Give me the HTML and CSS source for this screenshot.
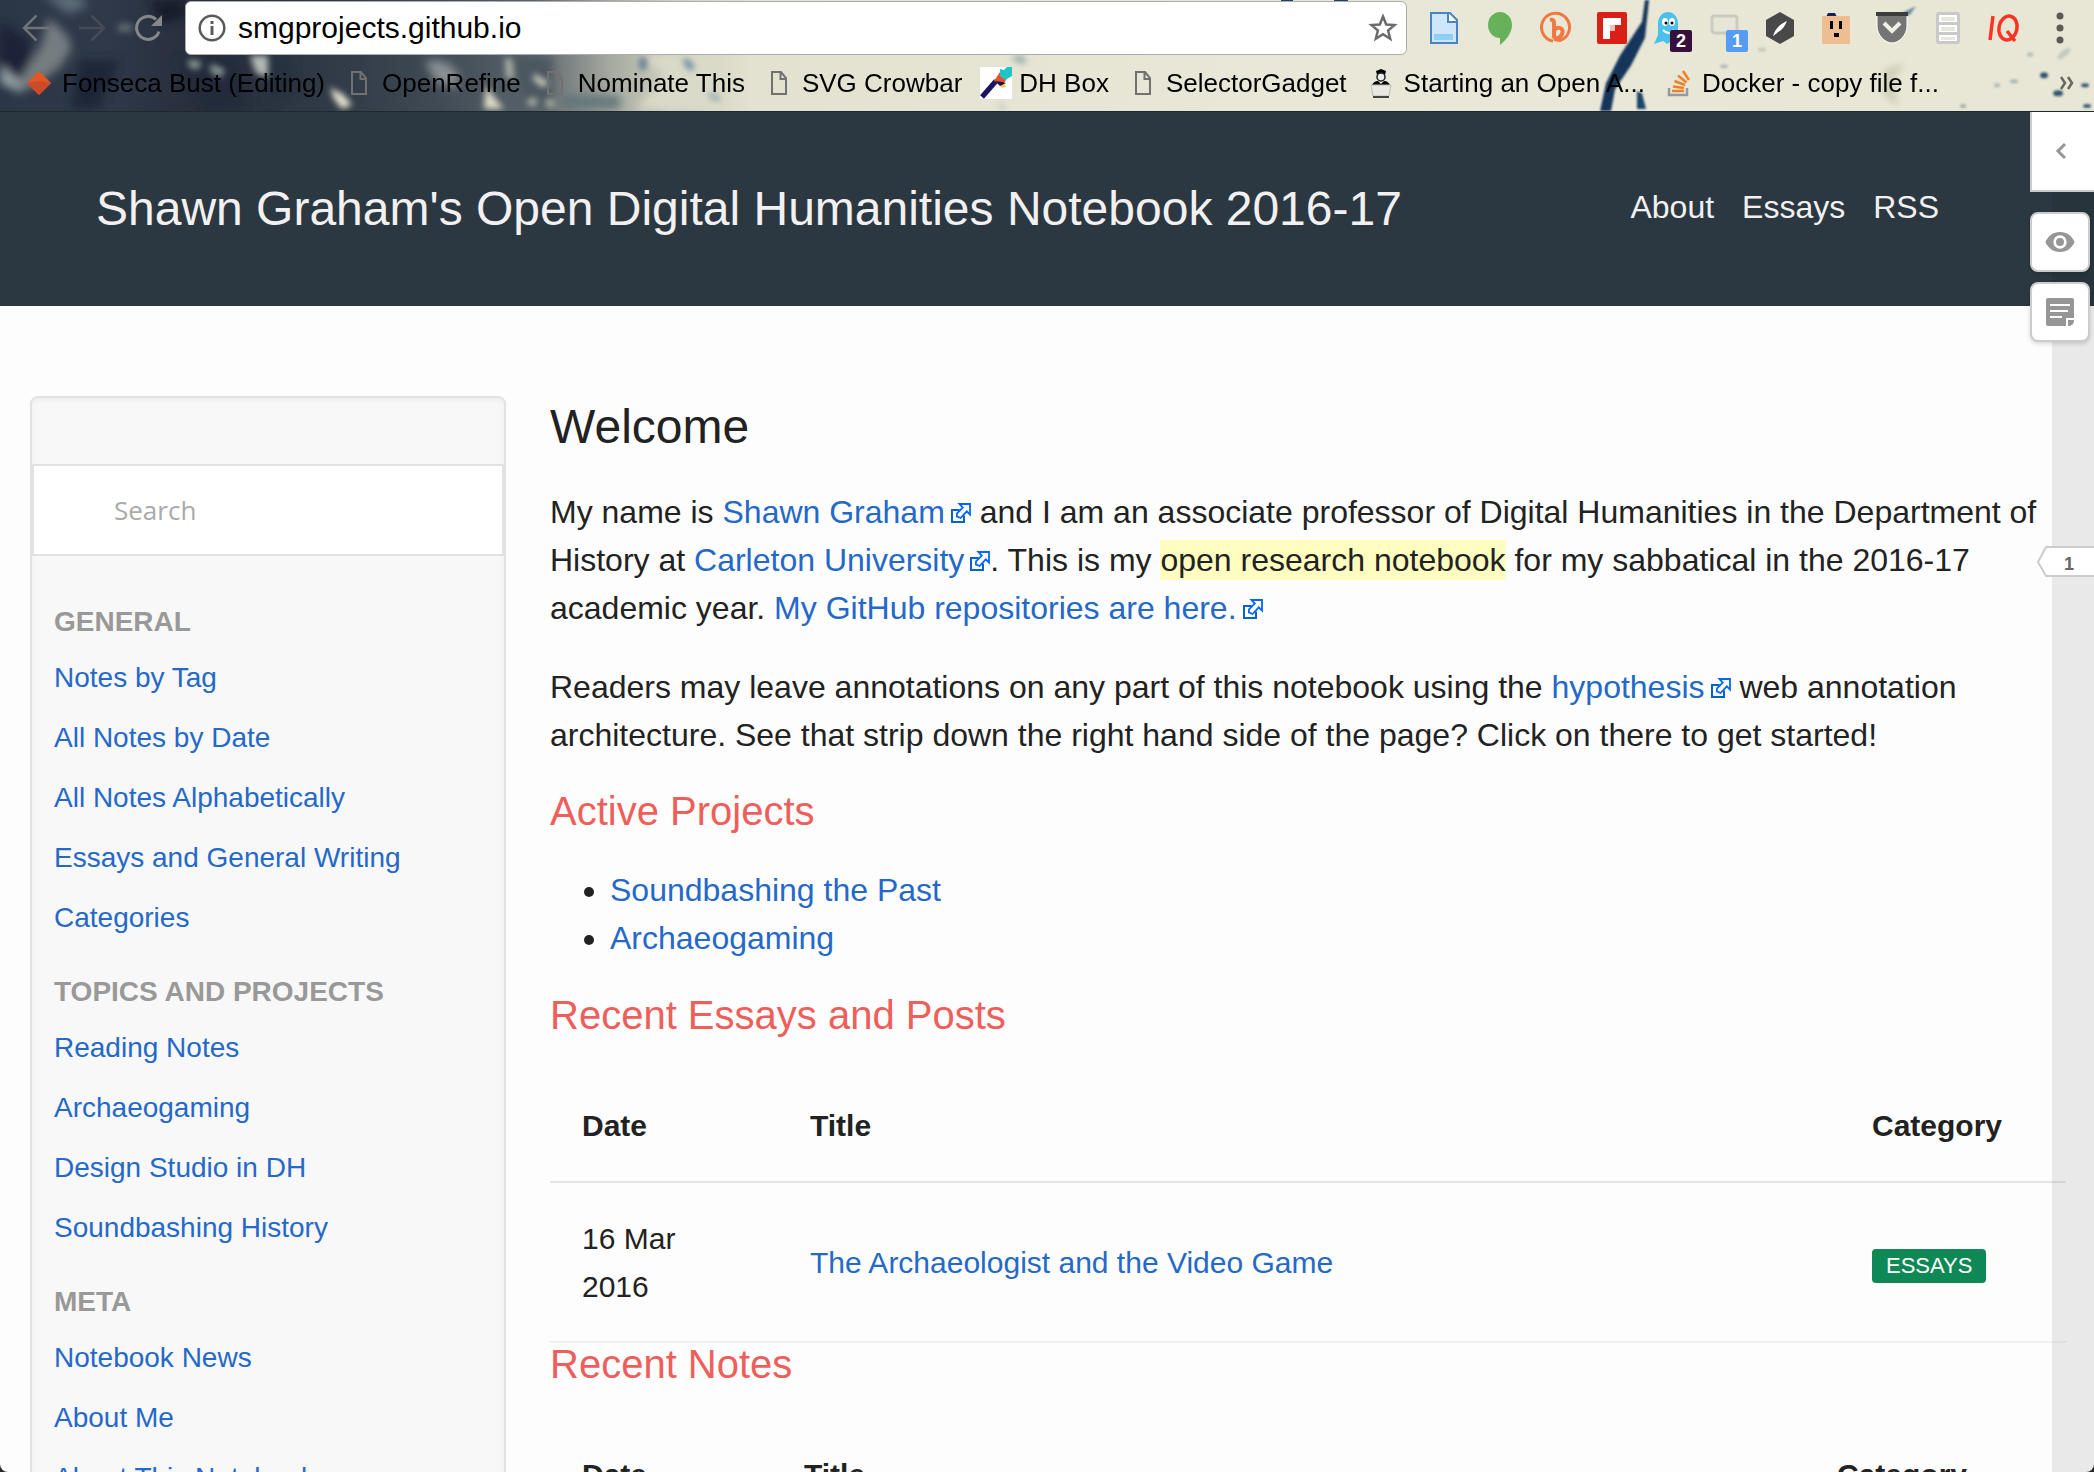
FILE: index.html
```html
<!DOCTYPE html>
<html lang="en">
<head>
<meta charset="utf-8">
<title>Shawn Graham's Open Digital Humanities Notebook 2016-17</title>
<link rel="stylesheet" href="styles.css">
</head>
<body>
<svg class="defs" width="0" height="0" aria-hidden="true">
  <defs>
    <symbol id="external" viewBox="0 0 10 10">
      <path d="M4.300 3.500H.5v6h6V6.200" fill="#fff" stroke="#0661c9"/>
      <path d="M4.200 .5h5.300v5.300L7.900 4.200 4.800 7.500 2.900 6.700 3 5.200 5.900 2.300z" fill="#fff" stroke="#0066ff" stroke-width=".9"/>
    </symbol>
    <symbol id="page" viewBox="0 0 16 24">
      <path d="M1 1h9l5 6v16H1zM9.500 1v7H15" fill="none" stroke="#717171" stroke-width="2"/>
    </symbol>
  </defs>
</svg>
<div class="window">
  <header class="chrome">
    <svg class="theme" viewBox="0 0 2094 112" preserveAspectRatio="none" aria-hidden="true">
      <defs>
        <linearGradient id="photo">
          <stop offset="0" stop-color="#2b3646"/><stop offset=".05" stop-color="#30394a"/>
          <stop offset=".1" stop-color="#262d3b"/><stop offset=".17" stop-color="#333d49"/>
          <stop offset=".21" stop-color="#414b55"/><stop offset=".255" stop-color="#59636a"/>
          <stop offset=".29" stop-color="#a3a79e"/><stop offset=".32" stop-color="#cfcfbe"/>
          <stop offset=".36" stop-color="#e3e2d0"/><stop offset=".6" stop-color="#e9e8d8"/>
          <stop offset="1" stop-color="#e8e7d5"/>
        </linearGradient>
        <filter id="soft" x="-50%" y="-50%" width="200%" height="200%"><feGaussianBlur stdDeviation="5"/></filter>
        <filter id="fine" x="-50%" y="-50%" width="200%" height="200%"><feGaussianBlur stdDeviation="3"/></filter>
        <filter id="edge" x="-50%" y="-50%" width="200%" height="200%"><feGaussianBlur stdDeviation="1"/></filter>
      </defs>
      <rect width="2094" height="112" fill="url(#photo)"/>
      <g filter="url(#soft)">
        <path d="M0 22 28 40 34 75 18 84 0 62z" fill="#1a2238"/>
        <path d="M48 18 66 34 72 48 60 68 30 90 14 90 26 70 42 44z" fill="#747d80"/>
        <path d="M0 66 20 82 22 94 0 84z" fill="#95a1a5"/>
        <path d="M80 60h40l-20 50H70z" fill="#1e2537"/>
        <path d="M42-6h36l10 12-20 8z" fill="#5d6a78"/>
        <path d="M150 0h36v18l-26 6z" fill="#151c2b"/>
        <path d="M176 60h60l10 50h-40z" fill="#202a3b"/>
        <path d="M262 56h30l4 36-28 14z" fill="#283140"/>
        <path d="M425 62c20-6 40 10 32 26l-20-4z" fill="#899195"/>
        <path d="M512 58h40v52h-26z" fill="#4c565f"/>
        <path d="M560 96h60v14h-60z" fill="#65767a"/>
        <path d="M640 56l26 20-30 34h80V56z" fill="#dadac9"/>
      </g>
      <g filter="url(#fine)">
        <path d="M250 56h18v22l-12-4z" fill="#b4b9b5"/>
        <path d="M188 60l14 2-4 8-9-2zM210 64l15 6-3 8-11-4z" fill="#8b9894"/>
        <path d="M330 88l14 8 8 10-10 4-8-10z" fill="#e6e5d0"/>
        <path d="M486 86l8 12 10 12h-20z" fill="#dddbc6"/>
        <path d="M505 58l7 2 2 20-8-2z" fill="#aeb2aa"/>
        <path d="M534 74l16 10-8 4-9-8z" fill="#cdcdbb"/>
        <path d="M527 100l10-2v9h-9zM545 100l10 1v7h-9z" fill="#a7aea4"/>
        <path d="M118 24h14v8h-14z" fill="#5e6a6c"/>
        <path d="M640 58h6v12h-6zM684 58l10 8-2 6-8-8z" fill="#50708c"/>
        <path d="M706 93l12 3 3 6-8-1z" fill="#8ca0aa"/>
        <path d="M1010 58l12-2 6 8-10-1zM1000 102l5 8h-4z" fill="#8fa4a8"/>
        <path d="M1885 68l20-4-12 18 6 26-16-12z" fill="#d0d0bb"/>
      </g>
      <g filter="url(#edge)">
        <path d="M1645 0l4 0-4 38-14 28-16 24-4 22h-11l6-28 14-28 22-34z" fill="#14365a"/>
        <path d="M1637 92l5 2 4 16h-9z" fill="#1b446b"/>
        <path d="M1904 12l12-6-6 9-12 5z" fill="#6f8fa6"/>
      </g>
      <path d="M1281 0h12v1h-12zM1334 0h14v1h-14z" fill="#1d4268"/>
      <g fill="#31546f" filter="url(#edge)">
        <ellipse cx="2044" cy="76" rx="4" ry="3"/><ellipse cx="2058" cy="94" rx="5" ry="3"/>
        <ellipse cx="2085" cy="86" rx="4" ry="2"/><ellipse cx="2087" cy="107" rx="4" ry="2"/>
        <ellipse cx="2014" cy="82" rx="4" ry="2" opacity=".35"/><ellipse cx="1997" cy="86" rx="3" ry="2" opacity=".3"/>
        <ellipse cx="1963" cy="107" rx="3" ry="2" opacity=".4"/><ellipse cx="2030" cy="55" rx="3" ry="2" opacity=".3"/>
        <ellipse cx="1724" cy="67" rx="4" ry="2" opacity=".3"/><ellipse cx="2064" cy="54" rx="8" ry="3" opacity=".2" transform="rotate(-40 2064 54)"/>
        <ellipse cx="1762" cy="50" rx="4" ry="2" opacity=".2"/>
      </g>
    </svg>
    <div class="toolbar">
      <div class="nav-buttons">
        <button aria-label="Back"><svg width="28" height="28" viewBox="0 0 28 28" fill="none" stroke="#707277" stroke-width="2.500"><path d="M27 14H2M14.500 1.500 2 14l12.500 12.500"/></svg></button>
        <button aria-label="Forward"><svg width="28" height="28" viewBox="0 0 28 28" fill="none" stroke="#454b56" stroke-width="2.500"><path d="M1 14h25M13.500 1.500 26 14 13.500 26.500"/></svg></button>
        <button aria-label="Reload"><svg width="28" height="28" viewBox="0 0 28 28"><path d="M22 5.500A11.500 11.500 0 1 0 25 17.500" fill="none" stroke="#85878a" stroke-width="3"/><path d="M28 1v11H17z" fill="#85878a"/></svg></button>
      </div>
      <div class="omnibox">
        <svg width="28" height="28" viewBox="0 0 28 28" aria-hidden="true"><circle cx="14" cy="14" r="12.300" fill="none" stroke="#5a5a5a" stroke-width="2.500"/><path d="M12.500 7h3v3h-3zm0 5h3v9h-3z" fill="#5a5a5a"/></svg>
        <input class="url" type="text" aria-label="Address" value="smgprojects.github.io">
        <button class="star" aria-label="Bookmark this page"><svg width="30" height="30" viewBox="0 0 30 30"><path d="m15 3.500 3.200 8 8.300.6-6.400 5.400 2.100 8.200L15 21.200l-7.200 4.500 2.100-8.200-6.400-5.400 8.300-.6z" fill="none" stroke="#6b6b6b" stroke-width="2.500"/></svg></button>
      </div>
      <div class="extensions">
        <button aria-label="Document"><svg width="32" height="34" viewBox="0 0 32 34"><path d="M3 2h19l7 7v23H3z" fill="#cfe6fa" stroke="#4585c5" stroke-width="2"/><path d="M20 2v9h9" fill="#fff" stroke="#4585c5" stroke-width="2"/><path d="M6 25h19v4H6z" fill="#8bd2f4"/><path d="M6 24h19" stroke="#51b4e2"/></svg></button>
        <button aria-label="Hangouts"><svg width="26" height="34" viewBox="0 0 26 34"><path d="M13 1a12 13 0 0 1 12 13c0 8-6 15-12 20v-7C6 27 1 21 1 14A12 13 0 0 1 13 1z" fill="#67b15b"/></svg></button>
        <button aria-label="Bitly"><svg width="32" height="34" viewBox="0 0 32 34" fill="none" stroke="#f1783f" stroke-width="3"><path d="M13 30a14 14 0 1 1 7-.5l-6-1"/><path d="M10 9c5-1 4 3 4 8v9" stroke-width="4"/><path d="M14 20c3-6 11-3 8 3-2 5-7 5-9 2" stroke-width="4"/></svg></button>
        <button aria-label="Flipboard"><svg width="30" height="32" viewBox="0 0 30 32"><rect width="30" height="32" rx="2" fill="#d91f16"/><path d="M6 6h18v7h-6v6h-5v8H6z" fill="#fff"/><path d="M13 13h5v6h-5z" fill="#f3bdbb"/></svg></button>
        <button aria-label="Ghostery"><svg width="30" height="34" viewBox="0 0 30 34"><path d="M5 13C5-3 25-3 25 13v19l-6-2-5 3-4-3-9 3 4-9z" fill="#4cc0ed"/><ellipse cx="12" cy="11" rx="3" ry="4" fill="#fff"/><ellipse cx="19" cy="11" rx="3" ry="4" fill="#fff"/><circle cx="13" cy="12" r="1.500"/><circle cx="19" cy="12" r="1.500"/><path d="M10 19q6 6 11 0" stroke="#fff" fill="none" stroke-width="2"/></svg><span class="badge badge-plum">2</span></button>
        <button aria-label="Annotations"><svg class="speech" width="32" height="34" viewBox="0 0 32 34"><path d="M6 5h21q2 0 2 2v13q0 2-2 2h-3v8l-7-8H7q-3 0-3-3V7q0-2 2-2z" fill="#e6e5d7" stroke="#cccbc1" stroke-width="3"/></svg><span class="badge badge-blue">1</span></button>
        <button aria-label="Quill"><svg width="28" height="34" viewBox="0 0 28 34"><path d="m14 1 14 8v16l-14 8-14-8V9z" fill="#494949"/><path d="M21 10c-7 3-12 8-14 15 2-1 4-3 5-4 4-2 7-6 9-11z" fill="#fff"/></svg></button>
        <button aria-label="Box friend"><svg width="30" height="34" viewBox="0 0 30 34"><path d="M5 6 7 2h7l2 4z" fill="#16205c"/><path d="M1 5h28v28H1z" fill="#efbe90"/><path d="M9 10h3v8H9zm9 0h3v8h-3zM13 22h5v4h-5z"/></svg></button>
        <button aria-label="Pocket"><svg width="34" height="32" viewBox="0 0 34 32"><path d="M2 1h30v13c0 9-8 17-15 17S2 23 2 14z" fill="#757575" stroke="#fff"/><path d="M1 0h32v4H1z" fill="#3c3c3c"/><path d="m9 11 8 8 8-8" fill="none" stroke="#f1f0e4" stroke-width="4"/></svg></button>
        <button aria-label="Server"><svg width="26" height="34" viewBox="0 0 26 34"><rect x="1" y="1" width="24" height="32" rx="3" fill="#c9c9c9"/><path d="M4 4h18v7H4zm0 10h18v7H4zm0 10h18v6H4z" fill="#fff"/><path d="M6 6h14v4H6zm0 10h14v4H6zm0 10h14v3H6z" fill="#e8e7dd"/></svg></button>
        <button aria-label="IQ"><svg width="32" height="30" viewBox="0 0 32 30" fill="none" stroke="#fb3324" stroke-width="3.500"><path d="M5 3 2 27"/><ellipse cx="20" cy="15" rx="9" ry="12" transform="rotate(12 20 15)"/><path d="m19 18 8 10"/></svg></button>
        <button aria-label="Menu"><svg width="8" height="34" viewBox="0 0 8 34" fill="#5a5a58"><circle cx="4" cy="5" r="3.500"/><circle cx="4" cy="17" r="3.500"/><circle cx="4" cy="29" r="3.500"/></svg></button>
      </div>
    </div>
    <nav class="bookmarks" aria-label="Bookmarks">
      <a href="#"><span class="favicon"><svg width="24" height="24" viewBox="0 0 24 24"><path d="m12 0 12 12-12 12L0 12z" fill="#e35724"/><path d="M24 12 12 24 0 12l12-2z" fill="#cc4a28"/></svg></span>Fonseca Bust (Editing)</a>
      <a href="#"><span class="favicon"><svg width="16" height="24"><use href="#page"/></svg></span>OpenRefine</a>
      <a href="#"><span class="favicon"><svg width="16" height="24"><use href="#page"/></svg></span>Nominate This</a>
      <a href="#"><span class="favicon"><svg width="16" height="24"><use href="#page"/></svg></span>SVG Crowbar</a>
      <a href="#"><span class="favicon"><svg width="32" height="32" viewBox="0 0 32 32"><path d="M0 0h32v32H0z" fill="#fff"/><path d="m2 30 14-16" stroke="#1c1268" stroke-width="5"/><path d="m14 14 6-9 8 5-6 9z" fill="#e4502b"/><path d="m20 19 5-2 1 3-4 1z" fill="#f3cf5a"/><path d="m20 2 4 1 3-3h5v9l-7 4-5-4z" fill="#1fc4c8"/><path d="m15 14 7 1 4 1-6 3z" fill="#23113e"/></svg></span>DH Box</a>
      <a href="#"><span class="favicon"><svg width="16" height="24"><use href="#page"/></svg></span>SelectorGadget</a>
      <a href="#"><span class="favicon"><svg width="22" height="30" viewBox="0 0 22 30"><path d="m6 3 5-2 5 2-1 4H7z"/><circle cx="11" cy="9" r="4" fill="#eee" stroke="#222" stroke-width="1.500"/><path d="M2 17q2-4 6-4l3 3 3-3q4 0 6 4z"/><path d="M1 17h20l-2 11H3z" fill="#e9e8e0" stroke="#bbb"/><path d="M3 29h16" stroke="#444" stroke-width="2"/></svg></span>Starting an Open A...</a>
      <a href="#"><span class="favicon"><svg width="24" height="28" viewBox="0 0 24 28" fill="none"><path d="M2 19v7h18v-7" stroke="#919aa5" stroke-width="2.500"/><path d="M5 22h12M6 17.500l11 1.500M7.500 12l10.500 4M11 6.500l8.500 7M16 2l6 9" stroke="#ee8128" stroke-width="2.500"/></svg></span>Docker - copy file f...</a>
      <button class="more" aria-label="More bookmarks"><svg width="14" height="14" viewBox="0 0 14 14" fill="none" stroke="#66675f" stroke-width="2.500"><path d="m1 1 4 6-4 6M8 1l4 6-4 6"/></svg></button>
    </nav>
  </header>

  <div class="viewport">
    <header class="masthead">
      <h1>Shawn Graham's Open Digital Humanities Notebook 2016-17</h1>
      <nav class="site-nav" aria-label="Site">
        <a href="#">About</a>
        <a href="#">Essays</a>
        <a href="#">RSS</a>
      </nav>
    </header>

    <div class="layout">
      <aside class="sidebar">
        <input class="search" type="search" placeholder="Search" aria-label="Search">
        <section class="group">
          <h3>GENERAL</h3>
          <a href="#">Notes by Tag</a>
          <a href="#">All Notes by Date</a>
          <a href="#">All Notes Alphabetically</a>
          <a href="#">Essays and General Writing</a>
          <a href="#">Categories</a>
        </section>
        <section class="group">
          <h3>TOPICS AND PROJECTS</h3>
          <a href="#">Reading Notes</a>
          <a href="#">Archaeogaming</a>
          <a href="#">Design Studio in DH</a>
          <a href="#">Soundbashing History</a>
        </section>
        <section class="group">
          <h3>META</h3>
          <a href="#">Notebook News</a>
          <a href="#">About Me</a>
          <a href="#">About This Notebook</a>
        </section>
      </aside>

      <main class="content">
        <h2 class="welcome">Welcome</h2>
        <p>My name is <a href="#">Shawn Graham<svg class="ext"><use href="#external"/></svg></a> and I am an associate professor of Digital Humanities in the Department of History at <a href="#">Carleton University<svg class="ext"><use href="#external"/></svg></a>. This is my <mark>open research notebook</mark> for my sabbatical in the 2016-17 academic year. <a href="#">My GitHub repositories are here.<svg class="ext"><use href="#external"/></svg></a></p>
        <p>Readers may leave annotations on any part of this notebook using the <a href="#">hypothesis<svg class="ext"><use href="#external"/></svg></a> web annotation architecture. See that strip down the right hand side of the page? Click on there to get started!</p>
        <h2>Active Projects</h2>
        <ul>
          <li><a href="#">Soundbashing the Past</a></li>
          <li><a href="#">Archaeogaming</a></li>
        </ul>
        <h2>Recent Essays and Posts</h2>
        <table class="essays">
          <thead><tr><th class="date">Date</th><th>Title</th><th class="category">Category</th></tr></thead>
          <tbody><tr><td>16 Mar 2016</td><td><a href="#">The Archaeologist and the Video Game</a></td><td><a class="tag" href="#">ESSAYS</a></td></tr></tbody>
        </table>
        <h2>Recent Notes</h2>
        <table class="notes">
          <thead><tr><th class="date">Date</th><th>Title</th><th class="category">Category</th></tr></thead>
        </table>
      </main>
    </div>

    <div class="annotator">
      <button class="collapse" aria-label="Open annotations"><svg width="12" height="18" viewBox="0 0 12 18"><path d="m10 2-7 7 7 7" fill="none" stroke="#969696" stroke-width="3"/></svg></button>
      <button class="tool" aria-label="Toggle highlights"><svg width="30" height="20" viewBox="0 0 30 20"><path d="M15 0c7 0 12 4 14.500 10C27 16 22 20 15 20S3 16 .5 10C3 4 8 0 15 0z" fill="#969696"/><circle cx="15" cy="10" r="6.700" fill="#fff"/><circle cx="15" cy="10" r="4" fill="#969696"/></svg></button>
      <button class="tool" aria-label="New page note"><svg width="28" height="28" viewBox="0 0 28 28"><path d="M2 0h24q2 0 2 2v18h-8v8H2q-2 0-2-2V2q0-2 2-2zM22 22h6q0 6-6 6z" fill="#969696"/><path d="M4 7h20M4 13h18M4 19h12" stroke="#fff" stroke-width="2"/></svg></button>
      <button class="marker" aria-label="1 annotation"><svg viewBox="0 0 58 34" width="58" height="34" aria-hidden="true"><path d="M58 2H10L2 17l8 14h48" fill="#fff" stroke="#ccc" stroke-width="2"/></svg><span>1</span></button>
    </div>
  </div>
</div>
</body>
</html>
```
FILE: styles.css
```css
* { box-sizing: border-box; }
body {
  margin: 0;
  background: #2a2620;
  color: #222;
  font: 32px/48px "Liberation Sans", Arial, sans-serif;
}
a { color: #2569c8; text-decoration: none; }
button {
  padding: 0;
  border: 0;
  background: none;
  font: inherit;
  display: flex;
  align-items: center;
  justify-content: center;
}
h1, h2, h3, p, ul { margin: 0; }
.defs { position: absolute; }
.window {
  height: 100vh;
  display: flex;
  flex-direction: column;
  overflow: hidden;
  border-radius: 0 0 8px 8px;
}

/* Browser chrome */
.chrome {
  position: relative;
  flex: none;
  height: 112px;
  border-bottom: 1px solid #20282f;
  isolation: isolate;
}
.theme {
  position: absolute;
  inset: 0;
  width: 100%;
  height: 100%;
  z-index: -1;
}
.toolbar {
  display: flex;
  align-items: center;
  height: 56px;
  padding: 0 6px 0 22px;
}
.nav-buttons { display: flex; gap: 28px; width: 163px; }
.omnibox {
  flex: 1;
  display: flex;
  align-items: center;
  height: 54px;
  padding: 0 8px 0 12px;
  border: 1px solid #adadad;
  border-radius: 6px;
  background: #fff;
}
.url {
  flex: 1;
  min-width: 0;
  padding: 0 0 0 12px;
  border: 0;
  outline: 0;
  background: none;
  color: #000;
  font: 30px/40px "Liberation Sans", Arial, sans-serif;
}
.extensions { display: flex; padding-left: 9px; }
.extensions button { position: relative; width: 56px; height: 48px; }
.badge {
  position: absolute;
  right: 4px;
  bottom: 0;
  width: 22px;
  border-radius: 2px;
  color: #fff;
  font-size: 18px;
  font-weight: bold;
  line-height: 22px;
}
.badge-plum { background: #390f3c; }
.badge-blue { background: #569bf4; }
.bookmarks {
  display: flex;
  align-items: center;
  gap: 18px;
  height: 54px;
  padding: 0 20px 0 23px;
  font-size: 26px;
  white-space: nowrap;
}
.bookmarks a { display: flex; align-items: center; gap: 7px; color: #000; }
.favicon { display: flex; justify-content: center; width: 32px; }
.more { margin-left: auto; }

/* Page */
.viewport {
  position: relative;
  flex: 1;
  min-height: 0;
  overflow: hidden;
  background: #fdfdfd;
}
.masthead {
  display: flex;
  align-items: center;
  justify-content: space-between;
  height: 194px;
  padding: 0 155px 0 96px;
  background: #2b3841;
  color: #f2f0f0;
}
h1 { font-size: 48px; line-height: 60px; font-weight: normal; }
.site-nav { display: flex; gap: 28px; padding-bottom: 4px; }
.site-nav a { color: inherit; }
.layout {
  display: grid;
  grid-template-columns: 476px 1fr;
  gap: 44px;
  padding: 90px 28px 0 30px;
}

.sidebar {
  padding: 66px 0 40px;
  border: 2px solid #e2e2e2;
  border-radius: 8px;
  background: #f8f8f8;
  box-shadow: inset 0 2px 6px rgba(0, 0, 0, .05);
  font-size: 28px;
}
.search {
  display: block;
  width: 100%;
  height: 92px;
  margin-bottom: 40px;
  padding: 0 80px;
  border: 2px solid #e2e2e2;
  border-radius: 0;
  outline: 0;
  background: #fff;
  font: 26px/36px "Open Sans", "Noto Sans", sans-serif;
  appearance: none;
}
.search::placeholder { color: #aaa; opacity: 1; }
.group { padding: 0 22px; margin-bottom: 18px; }
.group h3 { color: #999; font-size: 28px; line-height: 52px; }
.group a { display: block; line-height: 60px; }

.content h2 {
  margin-bottom: 34px;
  color: #ee5f5b;
  font-size: 40px;
  font-weight: normal;
  line-height: 42px;
}
.content .welcome {
  margin-bottom: 30px;
  color: #222;
  font-size: 48px;
  line-height: 62px;
}
p { margin-bottom: 31px; }
mark { padding: 2px 0; background: #fffdc0; color: inherit; }
.ext { width: 20px; height: 20px; margin-left: 6px; }
ul { margin-bottom: 32px; padding-left: 60px; }
table {
  width: 100%;
  border-spacing: 0;
  table-layout: fixed;
  font-size: 30px;
}
th { padding: 32px 32px 31px; border-bottom: 2px solid #e5e5e5; text-align: left; }
td { padding: 32px 32px 30px; border-bottom: 2px solid #f2f2f2; }
.essays .date { width: 228px; }
.essays .category { width: 226px; }
.notes .date { width: 222px; }
.notes .category { width: 261px; }
.tag {
  display: inline-block;
  padding: 0 14px;
  border-radius: 4px;
  background: #0e8855;
  color: #fff;
  font-size: 22px;
  line-height: 34px;
}

/* Annotation strip, laid over the page */
.annotator {
  position: absolute;
  inset: 0 0 0 auto;
  width: 64px;
  background: linear-gradient(to right, transparent 22px, rgba(0, 0, 0, .08) 22px);
}
.collapse {
  width: 64px;
  height: 80px;
  margin-bottom: 20px;
  padding-right: 4px;
  border: solid #ccc;
  border-width: 0 0 2px 2px;
  background: #fff;
}
.tool {
  width: 60px;
  height: 60px;
  margin-bottom: 10px;
  border: 2px solid #ccc;
  border-radius: 8px;
  background: #fff;
  box-shadow: 0 2px 4px rgba(0, 0, 0, .15);
}
.marker {
  position: absolute;
  top: 433px;
  right: 0;
  color: #666;
  font-size: 18px;
  font-weight: bold;
  line-height: 34px;
}
.marker span { position: absolute; left: 28px; top: 2px; }
```
